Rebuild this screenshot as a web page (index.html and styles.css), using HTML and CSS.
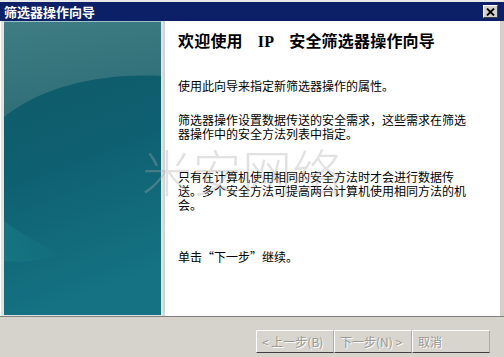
FILE: index.html
```html
<!DOCTYPE html>
<html>
<head>
<meta charset="utf-8">
<link rel="stylesheet" href="styles.css">
</head>
<body>
<div class="window">
  <div class="titlebar">
    <span class="title">筛选器操作向导</span>
    <span class="close">
      <svg width="9" height="8" viewBox="0 0 9 8"><path d="M1 0.5 L8 7.5 M8 0.5 L1 7.5" stroke="#000" stroke-width="1.8"/></svg>
    </span>
  </div>
  <div class="main">
    <div class="side">
      <svg class="art" width="157" height="294" viewBox="0 0 157 294" preserveAspectRatio="none">
        <defs>
          <linearGradient id="g1" x1="0" y1="0" x2="0.3" y2="1">
            <stop offset="0" stop-color="#3f7d83"/>
            <stop offset="1" stop-color="#2e6e77"/>
          </linearGradient>
          <linearGradient id="g2" x1="0" y1="0" x2="0.2" y2="1">
            <stop offset="0" stop-color="#0f5966"/>
            <stop offset="0.5" stop-color="#0e5f70"/>
            <stop offset="1" stop-color="#147282"/>
          </linearGradient>
          <linearGradient id="g3" x1="0" y1="0" x2="1" y2="0">
            <stop offset="0" stop-color="#1a8088" stop-opacity="0.5"/>
            <stop offset="1" stop-color="#1a8088" stop-opacity="0"/>
          </linearGradient>
        </defs>
        <rect width="157" height="294" fill="url(#g2)"/>
        <path d="M0 0 H157 V55 C100 52 40 64 0 96 Z" fill="url(#g1)"/>
        <path d="M0 200 C20 215 40 225 60 232 C40 240 20 242 0 240 Z" fill="url(#g3)"/>
        <rect x="0" y="0" width="157" height="1" fill="#9cc0c4"/>
      </svg>
    </div>
    <div class="content">
      <h1>欢迎使用<span class="ip">IP</span>安全筛选器操作向导</h1>
      <p class="p1">使用此向导来指定新筛选器操作的属性。</p>
      <p class="p2">筛选器操作设置数据传送的安全需求，这些需求在筛选器操作中的安全方法列表中指定。</p>
      <p class="p3">只有在计算机使用相同的安全方法时才会进行数据传送。多个安全方法可提高两台计算机使用相同方法的机会。</p>
      <p class="p4">单击“下一步”继续。</p>
    </div>
  </div>
  <div class="footer">
    <div class="btns">
      <span class="btn">&lt; 上一步(B)</span>
      <span class="btn">下一步(N) &gt;</span>
      <span class="btn">取消</span>
    </div>
  </div>
  <div class="watermark">米安网络</div>
</div>
</body>
</html>
```
FILE: styles.css
```css
* { box-sizing: border-box; }
html, body { margin: 0; padding: 0; }
body {
  width: 504px;
  height: 357px;
  overflow: hidden;
  background: #d4d0c8;
  font-family: "Noto Sans CJK SC", "Liberation Sans", sans-serif;
}
.window {
  position: relative;
  width: 504px;
  height: 357px;
  display: flex;
  flex-direction: column;
}
.titlebar {
  height: 21px;
  border-top: 2px solid #e8e8e8;
  background: #0b2066;
  display: flex;
  align-items: center;
  justify-content: space-between;
  padding: 0 6px 0 4px;
}
.title {
  color: #fff;
  font-weight: bold;
  font-size: 13px;
  line-height: 15px;
  letter-spacing: 0px;
}
.close {
  width: 15px;
  height: 13px;
  background: #d4d0c8;
  border-top: 1px solid #fff;
  border-left: 1px solid #fff;
  border-right: 1px solid #404040;
  border-bottom: 1px solid #404040;
  display: flex;
  align-items: center;
  justify-content: center;
}
.main {
  height: 295px;
  display: flex;
  border-left: 1px solid #fff;
  background: #fff;
}
.side {
  width: 164px;
  padding-left: 3px;
  background: #e4e2dc;
  border-right: 2px solid #c9d6da;
  display: flex;
}
.art { display: block; }
.content {
  flex: 1;
  background: #fff;
  padding: 9px 0 0 13px;
  border-right: 4px solid #d4d0c8;
  color: #000;
}
h1 {
  margin: 0;
  font-size: 16px;
  line-height: 20px;
  font-weight: bold;
  letter-spacing: 0.2px;
}
.ip {
  font-family: "Liberation Serif", serif;
  margin: 0 15px;
}
p {
  margin: 0;
  font-size: 12px;
  line-height: 14px;
  width: 294px;
}
.p1 { margin-top: 27px; }
.p2 { margin-top: 20px; }
.p3 { margin-top: 29px; }
.p4 { margin-top: 38px; }
.footer {
  flex: 1;
  border-top: 1px solid #808080;
  background: #d6d2cc;
  display: flex;
  justify-content: flex-end;
  padding: 13px 14px 0 0;
}
.btns {
  display: flex;
  height: 23px;
}
.btn {
  width: 78px;
  height: 23px;
  border-top: 1px solid #fff;
  border-left: 1px solid #fff;
  border-bottom: 1px solid #404040;
  border-right: 1px solid #b0aca4;
  font-size: 12px;
  line-height: 21px;
  color: #9a9893;
  text-shadow: 1px 1px 0 #fff;
  padding-left: 5px;
  background: #d8d5cf;
}
.watermark {
  position: absolute;
  left: 142px;
  top: 140px;
  font-size: 50px;
  line-height: 60px;
  color: rgba(170, 170, 170, 0.35);
  font-family: "Noto Sans CJK SC", sans-serif;
  font-weight: 300;
  letter-spacing: 0;
  pointer-events: none;
}
```
